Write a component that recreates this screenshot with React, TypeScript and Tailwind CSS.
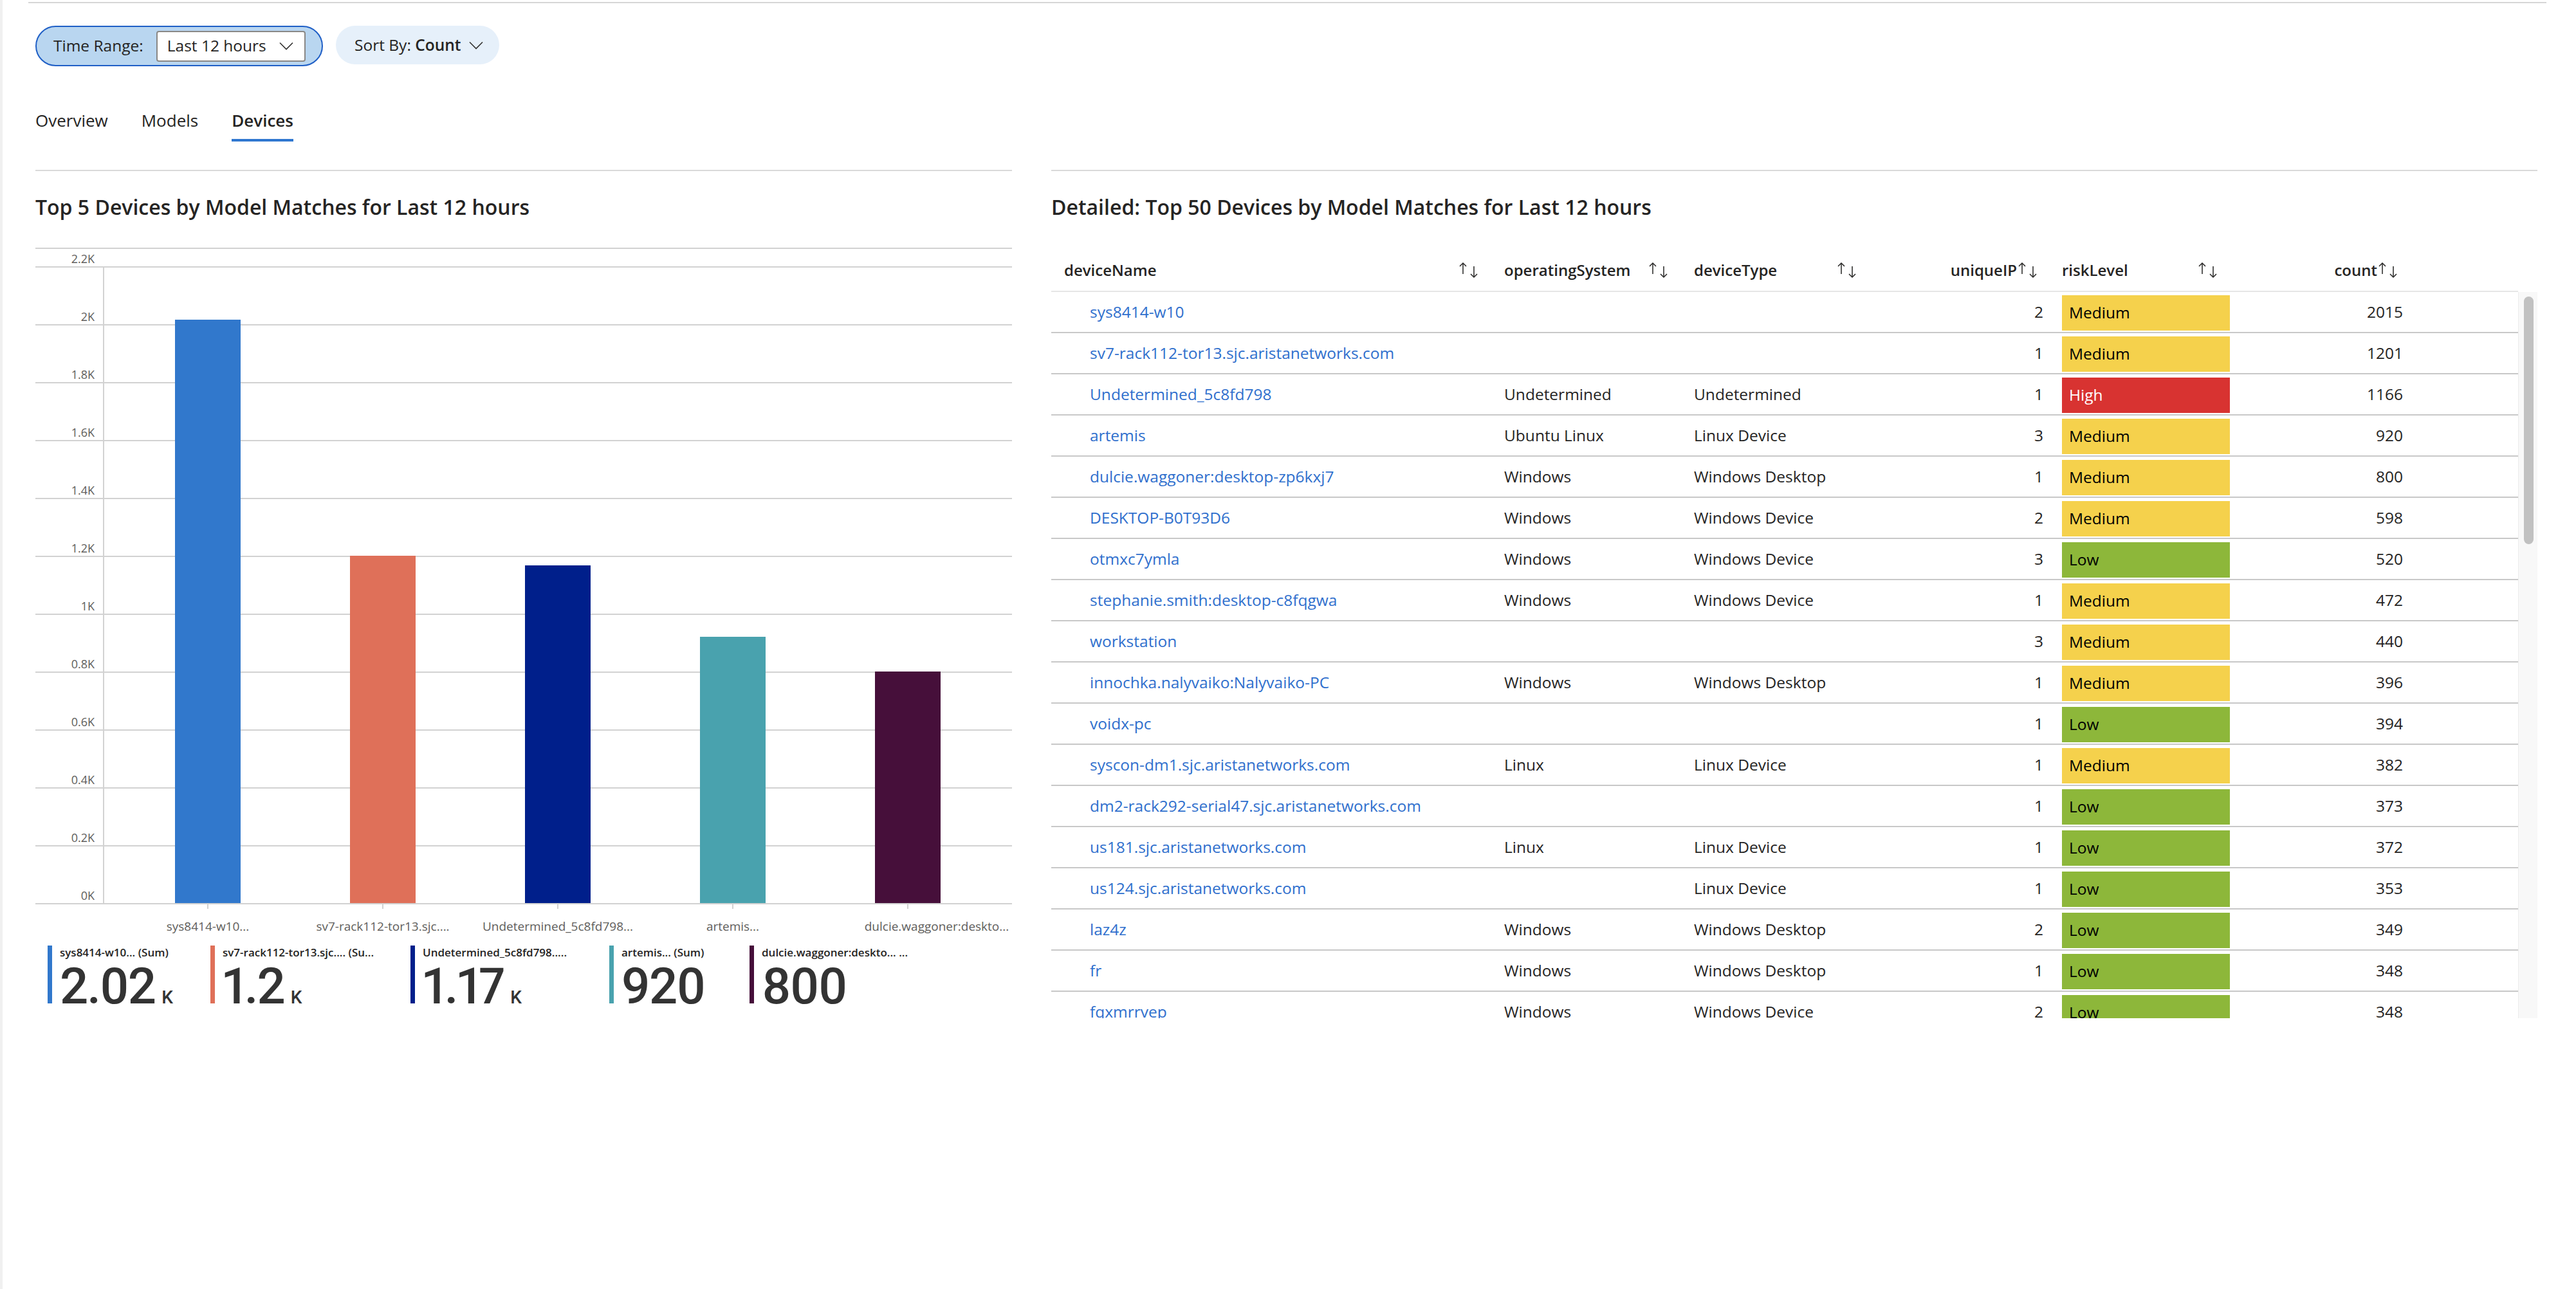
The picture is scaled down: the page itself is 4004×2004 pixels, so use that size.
import React from "react";

const bars = [
    { xlabel: "sys8414-w10...", card: "sys8414-w10... (Sum)", value: 2015, num: "2.02", unit: "K", color: "bg-[#3178cc]", border: "border-[#3178cc]", cardW: "w-[253px]", shift: "" },
    { xlabel: "sv7-rack112-tor13.sjc....", card: "sv7-rack112-tor13.sjc.... (Su...", value: 1201, num: "1.2", unit: "K", color: "bg-[#df7059]", border: "border-[#df7059]", cardW: "w-[311px]", shift: "" },
    { xlabel: "Undetermined_5c8fd798...", card: "Undetermined_5c8fd798.....", value: 1166, num: "1.17", unit: "K", color: "bg-[#001f8b]", border: "border-[#001f8b]", cardW: "w-[309px]", shift: "" },
    { xlabel: "artemis...", card: "artemis... (Sum)", value: 920, num: "920", unit: "", color: "bg-[#49a2ae]", border: "border-[#49a2ae]", cardW: "w-[218px]", shift: "" },
    { xlabel: "dulcie.waggoner:deskto...", card: "dulcie.waggoner:deskto... ...", value: 800, num: "800", unit: "", color: "bg-[#460f3a]", border: "border-[#460f3a]", cardW: "w-[300px]", shift: "translate-x-[45px]" },
];

const ticks = ["2K", "1.8K", "1.6K", "1.4K", "1.2K", "1K", "0.8K", "0.6K", "0.4K", "0.2K", "0K"];

const rows = [
    ["sys8414-w10", "", "", 2, "Medium", 2015],
    ["sv7-rack112-tor13.sjc.aristanetworks.com", "", "", 1, "Medium", 1201],
    ["Undetermined_5c8fd798", "Undetermined", "Undetermined", 1, "High", 1166],
    ["artemis", "Ubuntu Linux", "Linux Device", 3, "Medium", 920],
    ["dulcie.waggoner:desktop-zp6kxj7", "Windows", "Windows Desktop", 1, "Medium", 800],
    ["DESKTOP-B0T93D6", "Windows", "Windows Device", 2, "Medium", 598],
    ["otmxc7ymla", "Windows", "Windows Device", 3, "Low", 520],
    ["stephanie.smith:desktop-c8fqgwa", "Windows", "Windows Device", 1, "Medium", 472],
    ["workstation", "", "", 3, "Medium", 440],
    ["innochka.nalyvaiko:Nalyvaiko-PC", "Windows", "Windows Desktop", 1, "Medium", 396],
    ["voidx-pc", "", "", 1, "Low", 394],
    ["syscon-dm1.sjc.aristanetworks.com", "Linux", "Linux Device", 1, "Medium", 382],
    ["dm2-rack292-serial47.sjc.aristanetworks.com", "", "", 1, "Low", 373],
    ["us181.sjc.aristanetworks.com", "Linux", "Linux Device", 1, "Low", 372],
    ["us124.sjc.aristanetworks.com", "", "Linux Device", 1, "Low", 353],
    ["laz4z", "Windows", "Windows Desktop", 2, "Low", 349],
    ["fr", "Windows", "Windows Desktop", 1, "Low", 348],
    ["fqxmrrvep", "Windows", "Windows Device", 2, "Low", 348],
];

const riskStyle: any = {
    Medium: "bg-[#f5d14c] text-black",
    High: "bg-[#d83331] text-white",
    Low: "bg-[#8db73a] text-black",
};

function Chevron() {
    return (
        <svg width="22" height="13" viewBox="0 0 22 13" fill="none">
            <polyline points="1,1.5 11,11.5 21,1.5" stroke="#323130" strokeWidth="1.6" />
        </svg>
    );
}

function SortArrows() {
    return (
        <svg width="34" height="26" viewBox="0 0 34 26" fill="none" className="shrink-0">
            <g stroke="#252423" strokeWidth="1.5">
                <line x1="8" y1="2" x2="8" y2="19" />
                <polyline points="3,7 8,2 13,7" />
                <line x1="25" y1="7" x2="25" y2="24" />
                <polyline points="20,19 25,24 30,19" />
            </g>
        </svg>
    );
}

function HeaderCell({ label, right, spread, className }: { label: string; right?: boolean; spread?: boolean; className: string }) {
    return (
        <div className={`flex items-center ${spread ? "justify-between" : right ? "justify-end" : "justify-start"} ${className}`}>
            <span>{label}</span>
            <SortArrows />
        </div>
    );
}

export default function App() {
    return (
        <div className="flex w-[4004px] h-[2004px] bg-white text-[#252423] font-['Open_Sans',sans-serif] overflow-hidden">
            <div className="w-[4px] h-full bg-[#f0f0f0] shrink-0" />
            <div className="flex-1 pt-[3px]">
                <div className="ml-[40px] w-[3914px] border-t-2 border-[#d6d6d6]" />

                <div className="pl-[51px]">
                    {/* filters */}
                    <div className="flex items-start gap-[20px] mt-[35px]">
                        <div className="flex items-center h-[63px] w-[447px] rounded-full border-2 border-[#1f5fc6] bg-[#b9d6f0] pl-[26px] pr-[25px] gap-[20px]">
                            <span className="text-[24.5px] whitespace-nowrap">Time Range:</span>
                            <div className="flex items-center justify-between h-[48px] flex-1 rounded-[4px] border-2 border-[#8a8886] bg-white pl-[15px] pr-[17px]">
                                <span className="text-[24.5px] whitespace-nowrap">Last 12 hours</span>
                                <Chevron />
                            </div>
                        </div>
                        <div className="flex items-center gap-[12px] h-[60px] w-[254px] rounded-full bg-[#e6f0fa] pl-[29px]">
                            <span className="text-[24.5px] whitespace-nowrap">
                                Sort By: <span className="font-semibold">Count</span>
                            </span>
                            <Chevron />
                        </div>
                    </div>

                    {/* tabs */}
                    <div className="flex gap-[52px] mt-[67px] text-[26px]">
                        {["Overview", "Models", "Devices"].map((t) => (
                            <div key={t} className="flex flex-col">
                                <div className={`h-[34px] leading-[34px] ${t === "Devices" ? "font-semibold" : ""}`}>{t}</div>
                                <div className={`mt-[12px] h-[4px] ${t === "Devices" ? "bg-[#2f77d0]" : ""}`} />
                            </div>
                        ))}
                    </div>

                    {/* panels */}
                    <div className="flex gap-[61px] mt-[44px]">
                        {/* left panel */}
                        <div className="w-[1518px] border-t-2 border-[#d9d9d9]">
                            <h2 className="mt-[36px] text-[32px] leading-[40px] font-semibold">
                                Top 5 Devices by Model Matches for Last 12 hours
                            </h2>
                            <div className="mt-[43px] border-t-2 border-[#d2d2d2]">
                                <div className="relative">
                                    <div className="h-[29px] border-b-2 border-[#d2d2d2] flex items-end">
                                        <span className="w-[92px] text-right text-[18px] leading-[18px] pb-[3px] text-[#605e5c]">2.2K</span>
                                    </div>
                                    {ticks.map((t) => (
                                        <div key={t} className="h-[90px] border-b-2 border-[#d2d2d2] flex items-end">
                                            <span className="w-[92px] text-right text-[18px] leading-[18px] pb-[3px] text-[#605e5c]">{t}</span>
                                        </div>
                                    ))}
                                    <div className="absolute left-[105px] top-[27px] h-[990px] right-0 border-l-2 border-[#d2d2d2] flex items-end pl-[25px]">
                                        {bars.map((b) => (
                                            <div key={b.xlabel} className="w-[272px] flex justify-center items-end h-full">
                                                <div className={`w-[102px] ${b.color}`} style={{ height: Math.round(b.value * 0.45) }} />
                                            </div>
                                        ))}
                                    </div>
                                </div>
                                <div className="flex pl-[132px]">
                                    {bars.map((b) => (
                                        <div key={b.xlabel} className="w-[272px] flex flex-col items-center">
                                            <div className="h-[7px] w-[2px] bg-[#d2d2d2]" />
                                            <div className={`mt-[16px] text-[19px] leading-[22px] text-[#605e5c] whitespace-nowrap ${b.shift}`}>{b.xlabel}</div>
                                        </div>
                                    ))}
                                </div>
                                <div className="flex pl-[19px] mt-[18px]">
                                    {bars.map((b) => (
                                        <div key={b.card} className={`${b.cardW} shrink-0`}>
                                            <div className={`inline-flex flex-col border-l-[7px] ${b.border} pl-[12px] h-[90px]`}>
                                                <div className="text-[17px] leading-[22px] font-semibold whitespace-nowrap">{b.card}</div>
                                                <div className="flex items-baseline gap-[10px] mt-[3px] h-[65px] font-['Roboto',sans-serif] text-[#333333]">
                                                    <span className="text-[78px] leading-none font-medium tracking-[-2px] proportional-nums">{b.num}</span>
                                                    {b.unit && <span className="text-[28px] leading-none font-medium">{b.unit}</span>}
                                                </div>
                                            </div>
                                        </div>
                                    ))}
                                </div>
                            </div>
                        </div>

                        {/* right panel */}
                        <div className="w-[2310px] border-t-2 border-[#d9d9d9]">
                            <h2 className="mt-[36px] text-[32px] leading-[40px] font-semibold">
                                Detailed: Top 50 Devices by Model Matches for Last 12 hours
                            </h2>
                            <div className="mt-[46px] w-[2280px] h-[66px] border-b-2 border-[#e6e6e6] flex text-[24px] font-semibold">
                                <HeaderCell label="deviceName" spread className="w-[694px] pl-[20px] pr-[28px]" />
                                <HeaderCell label="operatingSystem" spread className="w-[295px] pl-[10px] pr-[28px]" />
                                <HeaderCell label="deviceType" spread className="w-[275px] pl-[10px] pr-[10px]" />
                                <HeaderCell label="uniqueIP" right className="w-[297px] pr-[26px]" />
                                <HeaderCell label="riskLevel" spread className="w-[281px] pl-[10px] pr-[27px]" />
                                <HeaderCell label="count" right className="w-[269px] pr-[16px]" />
                            </div>
                            <div className="flex h-[1129px] overflow-hidden">
                                <div className="w-[2280px] text-[24.5px]">
                                    {rows.map((r) => (
                                        <div key={r[0] as string} className="h-[64px] border-b-2 border-[#c8c8c8] flex">
                                            <div className="w-[694px] pl-[60px] flex items-center text-[#2f6fcd] whitespace-nowrap">{r[0]}</div>
                                            <div className="w-[295px] pl-[10px] flex items-center">{r[1]}</div>
                                            <div className="w-[275px] pl-[10px] flex items-center whitespace-nowrap">{r[2]}</div>
                                            <div className="w-[297px] pr-[19px] flex items-center justify-end">{r[3]}</div>
                                            <div className="w-[281px] px-[10px] pt-[5px]">
                                                <div className={`h-[55px] pl-[11px] flex items-center ${riskStyle[r[4] as string]}`}>{r[4]}</div>
                                            </div>
                                            <div className="w-[269px] pr-[10px] flex items-center justify-end">{r[5]}</div>
                                        </div>
                                    ))}
                                </div>
                                <div className="w-[30px] h-full bg-[#f8f8f8] border-l border-[#ececec] pl-[8px] pt-[7px]">
                                    <div className="w-[15px] h-[385px] rounded-full bg-[#c1c1c1]" />
                                </div>
                            </div>
                        </div>
                    </div>
                </div>
            </div>
        </div>
    );
}
